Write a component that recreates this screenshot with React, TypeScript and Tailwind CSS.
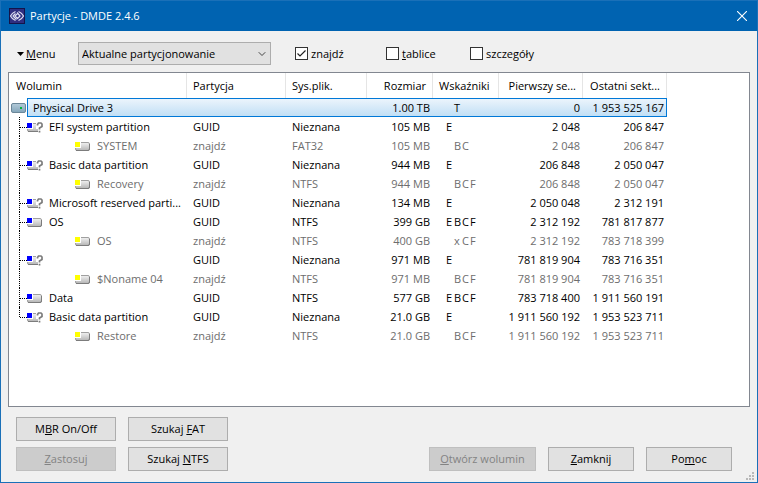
import { ChevronDown } from "lucide-react";
import type { ReactNode } from "react";

type VolumeKind = "partition" | "unknown" | "found";

type Volume = {
  kind: VolumeKind;
  name: string;
  scheme: string;
  fs: string;
  size: string;
  // one character per flag column, a space leaves the column empty
  flags: string;
  first: string;
  last: string;
};

const volumes: Volume[] = [
  { kind: "unknown", name: "EFI system partition", scheme: "GUID", fs: "Nieznana", size: "105 MB", flags: "E", first: "2 048", last: "206 847" },
  { kind: "found", name: "SYSTEM", scheme: "znajdź", fs: "FAT32", size: "105 MB", flags: " BC", first: "2 048", last: "206 847" },
  { kind: "unknown", name: "Basic data partition", scheme: "GUID", fs: "Nieznana", size: "944 MB", flags: "E", first: "206 848", last: "2 050 047" },
  { kind: "found", name: "Recovery", scheme: "znajdź", fs: "NTFS", size: "944 MB", flags: " BCF", first: "206 848", last: "2 050 047" },
  { kind: "unknown", name: "Microsoft reserved parti...", scheme: "GUID", fs: "Nieznana", size: "134 MB", flags: "E", first: "2 050 048", last: "2 312 191" },
  { kind: "partition", name: "OS", scheme: "GUID", fs: "NTFS", size: "399 GB", flags: "EBCF", first: "2 312 192", last: "781 817 877" },
  { kind: "found", name: "OS", scheme: "znajdź", fs: "NTFS", size: "400 GB", flags: " xCF", first: "2 312 192", last: "783 718 399" },
  { kind: "unknown", name: "", scheme: "GUID", fs: "Nieznana", size: "971 MB", flags: "E", first: "781 819 904", last: "783 716 351" },
  { kind: "found", name: "$Noname 04", scheme: "znajdź", fs: "NTFS", size: "971 MB", flags: " BCF", first: "781 819 904", last: "783 716 351" },
  { kind: "partition", name: "Data", scheme: "GUID", fs: "NTFS", size: "577 GB", flags: "EBCF", first: "783 718 400", last: "1 911 560 191" },
  { kind: "unknown", name: "Basic data partition", scheme: "GUID", fs: "Nieznana", size: "21.0 GB", flags: "E", first: "1 911 560 192", last: "1 953 523 711" },
  { kind: "found", name: "Restore", scheme: "znajdź", fs: "NTFS", size: "21.0 GB", flags: " BCF", first: "1 911 560 192", last: "1 953 523 711" },
];

const lastPartition = volumes.map((v) => v.kind !== "found").lastIndexOf(true);

function AppIcon() {
  return (
    <svg width="16" height="16" viewBox="0 0 16 16" aria-hidden="true">
      <rect width="16" height="16" fill="#14144a" />
      <rect x="1" y="1" width="14" height="14" fill="#2e2e80" />
      <g fill="none" stroke="#dcdcf0" strokeWidth="1.2" strokeLinejoin="round">
        <path d="M6.500 3.500Q3 5 1.500 8q1.500 3 5 4.500M8.500 5.500 6 8l2.500 2.500L11 8 8 4.500" />
        <path d="M9.500 12.500Q13 11 14.500 8q-1.500-3-5-4.500M6.500 5.500 4 8l3.500 3.500" />
      </g>
    </svg>
  );
}

function DriveIcon() {
  return (
    <svg width="15" height="11" viewBox="0 0 15 11" aria-hidden="true" className="shrink-0">
      <defs>
        <linearGradient id="drive" x1="0" y1="0" x2="0" y2="1">
          <stop offset="0" stopColor="#b4cbd9" />
          <stop offset="1" stopColor="#83a5b9" />
        </linearGradient>
      </defs>
      <rect x="0.500" y="1.500" width="14" height="9" rx="1.500" fill="url(#drive)" stroke="#6b8798" />
      <rect x="9" y="5" width="2" height="2" fill="#00b43c" />
    </svg>
  );
}

function VolumeIcon({ kind }: { kind: VolumeKind }) {
  return (
    <svg width="16" height="13" viewBox="0 -2 16 13" aria-hidden="true" className="shrink-0">
      <defs>
        <linearGradient id="volume" x1="0" y1="0" x2="0" y2="1">
          <stop offset="0" stopColor="#f2f2f2" />
          <stop offset="1" stopColor="#b4b4b4" />
        </linearGradient>
      </defs>
      <rect x="0.500" y="1.500" width="14" height="8" rx="1.500" fill="url(#volume)" stroke="#a0a0a0" />
      <path d="M14.500 3v5q0 1.500-1.500 1.500H1" fill="none" stroke="#7c7c7c" />
      {kind === "unknown" && (
        <>
          <path d="M9 0h7v11h-5V7H9z" fill="#fff" />
          <path
            d="M10.500 3.500V2.500L11.500 1h2.500l1 1v2.500L12.500 6v1.500M12.500 8.800v1.700"
            fill="none"
            stroke="#7c7c7c"
            strokeWidth="1.700"
          />
        </>
      )}
      <rect x="0" y="0" width="6" height="7" fill="#fff" />
      <rect x="0" y="1" width="5" height="5" fill={kind === "found" ? "#ffff00" : "#0000ff"} />
    </svg>
  );
}

function Check({ label, checked = false }: { label: ReactNode; checked?: boolean }) {
  return (
    <label className="flex items-center gap-[3px]">
      <span className="relative grid size-[13px]">
        <input
          type="checkbox"
          defaultChecked={checked}
          className="peer size-[13px] appearance-none border border-[#333] bg-white"
        />
        <svg viewBox="0 0 13 13" className="pointer-events-none absolute inset-0 hidden peer-checked:block" aria-hidden="true">
          <path d="M2.500 6.500 5 9l5.500-5.500" fill="none" stroke="#222" strokeWidth="1.200" />
        </svg>
      </span>
      {label}
    </label>
  );
}

function Button({ children, className, disabled }: { children: ReactNode; className: string; disabled?: boolean }) {
  return (
    <button
      type="button"
      disabled={disabled}
      className={`h-6 border border-[#adadad] bg-[#e1e1e1] text-center leading-4 whitespace-nowrap disabled:border-[#bfbfbf] disabled:bg-[#ccc] disabled:text-[#838383] ${className}`}
    >
      {children}
    </button>
  );
}

function Flags({ value }: { value: string }) {
  return (
    <span className="flex">
      {value.split("").map((flag, index) => (
        <span key={index} className="w-2">
          {flag}
        </span>
      ))}
    </span>
  );
}

function TreeCell({ volume, last }: { volume: Volume; last: boolean }) {
  const found = volume.kind === "found";
  const hasLine = volumes.indexOf(volume) < lastPartition || last;

  return (
    <div className="relative flex h-[19px] items-center">
      {hasLine && (
        <span
          className={`absolute top-0 left-[10px] border-l border-dotted border-black ${last ? "h-[10px]" : "h-full"}`}
        />
      )}
      {!found && <span className="absolute top-[10px] left-[11px] w-[7px] border-t border-dotted border-black" />}
      <span className={`flex items-center gap-[6px] ${found ? "pl-[66px]" : "pl-[18px]"}`}>
        <VolumeIcon kind={volume.kind} />
        <span className="whitespace-nowrap">{volume.name}</span>
      </span>
    </div>
  );
}

const head = "border-r border-[#e5e5e5] px-[6px] font-normal whitespace-nowrap first:pl-[7px]";
const selected = "border-y border-[#0078d7] bg-linear-to-b from-[#ebf4fc] to-[#c1dff5]";

export default function App() {
  return (
    <main className="flex min-h-screen flex-col border border-[#1a70b8] bg-[#f0f0f0] font-['Open_Sans','Noto_Sans',sans-serif] text-[11px] leading-[17px] text-black">
      <header className="flex h-[30px] items-center bg-[#0063b1] pr-[10px] pl-2 leading-4 text-white">
        <AppIcon />
        <h1 className="ml-[5px] flex-1">Partycje - DMDE 2.4.6</h1>
        <button type="button" aria-label="Zamknij okno" className="grid size-[10px] place-items-center">
          <svg width="10" height="10" viewBox="0 0 10 10" aria-hidden="true">
            <path d="m0 0 10 10M10 0 0 10" stroke="#fff" strokeWidth="1.100" />
          </svg>
        </button>
      </header>

      <div className="flex items-center pt-[11px] pb-[7px] pl-4">
        <button type="button" className="flex w-[61px] items-center gap-[2px]">
          <svg width="7" height="4" viewBox="0 0 7 4" aria-hidden="true">
            <path d="M0 0h7L3.500 4z" />
          </svg>
          <span>
            <u>M</u>enu
          </span>
        </button>
        <div className="relative">
          <select
            aria-label="Widok"
            className="h-[23px] w-[193px] appearance-none border border-[#adadad] bg-[#e1e1e1] pl-[3px]"
          >
            <option>Aktualne partycjonowanie</option>
          </select>
          <ChevronDown className="pointer-events-none absolute top-[6px] right-[3px] size-3 text-[#444]" strokeWidth={2} />
        </div>
        <div className="ml-6 grid grid-cols-[91px_84px_auto]">
          <Check label="znajdź" checked />
          <Check label={<span><u>t</u>ablice</span>} />
          <Check label={<span>szcze<u>g</u>óły</span>} />
        </div>
      </div>

      <section className="mx-[7px] flex-1 border border-[#828790] bg-white">
        <table className="w-[658px] table-fixed border-separate border-spacing-0 text-left">
          <colgroup>
            <col className="w-[178px]" />
            <col className="w-[99px]" />
            <col className="w-[81px]" />
            <col className="w-[66px]" />
            <col className="w-[66px]" />
            <col className="w-[84px]" />
            <col className="w-[84px]" />
          </colgroup>
          <thead>
            <tr className="h-[25px]">
              <th className={head}>Wolumin</th>
              <th className={head}>Partycja</th>
              <th className={head}>Sys.plik.</th>
              <th className={`${head} text-right`}>Rozmiar</th>
              <th className={head}>Wskaźniki</th>
              <th className={`${head} text-right`}>Pierwszy se...</th>
              <th className={`${head} text-right`}>Ostatni sekt...</th>
            </tr>
          </thead>
          <tbody>
            <tr className="h-[19px]">
              <td className="p-0">
                <div className="flex h-[19px] items-center pl-[2px]">
                  <DriveIcon />
                  <span className={`ml-px h-[19px] flex-1 border-l pl-[5px] ${selected}`}>Physical Drive 3</span>
                </div>
              </td>
              <td className={`p-0 ${selected}`} />
              <td className={`p-0 ${selected}`} />
              <td className={`p-0 pr-[3px] text-right ${selected}`}>1.00 TB</td>
              <td className={`p-0 pl-[13px] ${selected}`}>
                <Flags value=" T" />
              </td>
              <td className={`p-0 pr-[3px] text-right ${selected}`}>0</td>
              <td className={`border-r p-0 pr-[2px] text-right ${selected}`}>1 953 525 167</td>
            </tr>
            {volumes.map((volume, index) => (
              <tr
                key={index}
                className={`h-[19px] whitespace-nowrap ${volume.kind === "found" ? "text-[#6d6d6d]" : ""}`}
              >
                <td className="p-0">
                  <TreeCell volume={volume} last={index === lastPartition} />
                </td>
                <td className="p-0 pl-[6px]">{volume.scheme}</td>
                <td className="p-0 pl-[6px]">{volume.fs}</td>
                <td className="p-0 pr-[3px] text-right">{volume.size}</td>
                <td className="p-0 pl-[13px]">
                  <Flags value={volume.flags} />
                </td>
                <td className="p-0 pr-[3px] text-right">{volume.first}</td>
                <td className="p-0 pr-[3px] text-right">{volume.last}</td>
              </tr>
            ))}
          </tbody>
        </table>
      </section>

      <footer className="relative flex items-end justify-between pt-[10px] pr-[25px] pb-[11px] pl-[15px]">
        <div className="grid grid-cols-2 gap-x-3 gap-y-[6px]">
          <Button className="w-[100px]">M<u>B</u>R On/Off</Button>
          <Button className="w-[100px]">Szukaj <u>F</u>AT</Button>
          <Button className="w-[100px]" disabled><u>Z</u>astosuj</Button>
          <Button className="w-[100px]">Szukaj <u>N</u>TFS</Button>
        </div>
        <div className="flex gap-3">
          <Button className="w-[107px]" disabled><u>O</u>twórz wolumin</Button>
          <Button className="w-[86px]"><u>Z</u>amknij</Button>
          <Button className="w-[86px]">Po<u>m</u>oc</Button>
        </div>
        <svg width="8" height="8" viewBox="0 0 8 8" className="absolute right-[3px] bottom-[2px]" fill="#b8b8b8" aria-hidden="true">
          <path d="M6 0h2v2H6zM3 3h2v2H3zM6 3h2v2H6zM0 6h2v2H0zM3 6h2v2H3zM6 6h2v2H6z" />
        </svg>
      </footer>
    </main>
  );
}
